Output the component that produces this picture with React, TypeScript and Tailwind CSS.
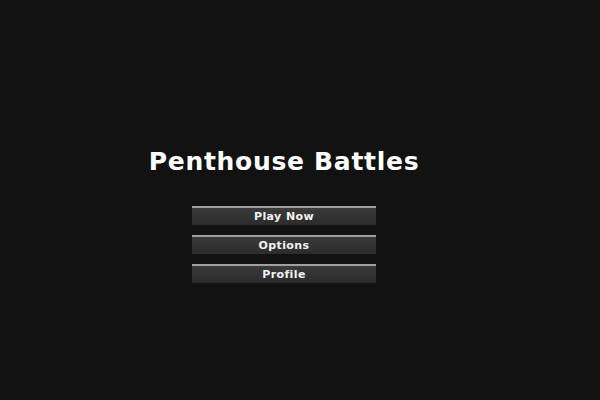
import React from 'react';

const items = ['Play Now', 'Options', 'Profile'];

const App: React.FC = () => {
  return (
    <div className="w-[600px] h-[400px] bg-[#121212] flex flex-col items-center pt-[147px] pr-[32px] font-['DejaVu_Sans',sans-serif]">
      <h1 className="text-[25px] leading-[30px] font-bold text-white tracking-[0.7px]">Penthouse Battles</h1>
      <div className="mt-[29px] flex flex-col gap-[10px]">
        {items.map((label) => (
          <button
            key={label}
            className="w-[184px] h-[19px] border-t-2 border-[#a0a0a0] bg-gradient-to-b from-[#3a3a3a] to-[#2c2c2c] text-[#f2f2f2] text-[11px] leading-[16px] font-bold tracking-[0.4px]"
          >
            {label}
          </button>
        ))}
      </div>
    </div>
  );
};

export default App;
